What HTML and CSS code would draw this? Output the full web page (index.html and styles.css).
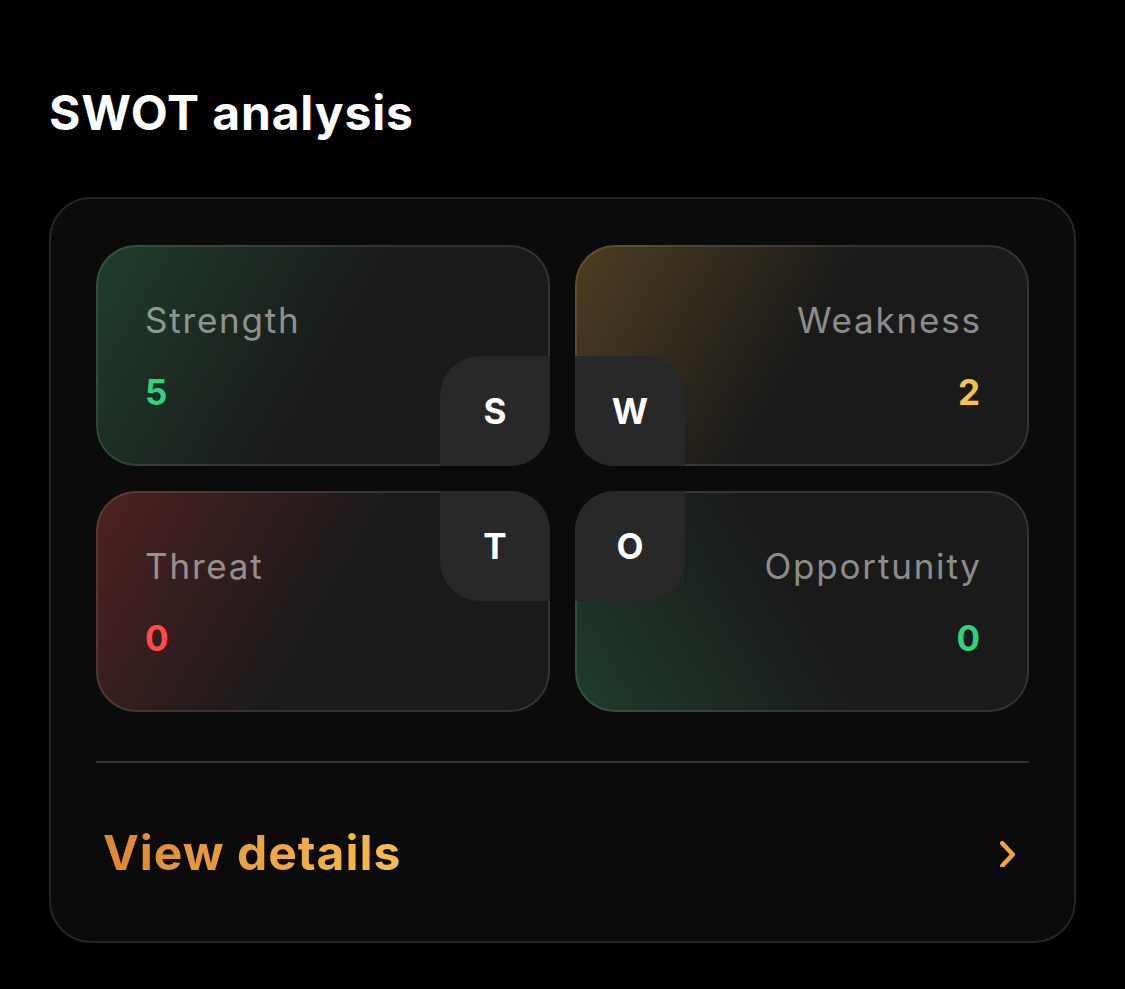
FILE: index.html
```html
<!DOCTYPE html>
<html lang="en">
<head>
<meta charset="utf-8">
<title>SWOT analysis</title>
<link rel="stylesheet" href="styles.css">
</head>
<body>
<main class="page">
  <h1 class="title">SWOT analysis</h1>
  <section class="panel">
    <div class="grid">
      <div class="card card-s">
        <div class="label">Strength</div>
        <div class="value value-green">5</div>
        <div class="tile tile-s">S</div>
      </div>
      <div class="card card-w right">
        <div class="label">Weakness</div>
        <div class="value value-yellow">2</div>
        <div class="tile tile-w">W</div>
      </div>
      <div class="card card-t">
        <div class="label">Threat</div>
        <div class="value value-red">0</div>
        <div class="tile tile-t">T</div>
      </div>
      <div class="card card-o right">
        <div class="label">Opportunity</div>
        <div class="value value-green">0</div>
        <div class="tile tile-o">O</div>
      </div>
    </div>
    <hr class="divider">
    <a class="footer" href="#">
      <span class="footer-text">View details</span>
      <svg class="chevron" width="18" height="30" viewBox="0 0 18 30" aria-hidden="true">
        <path d="M3.25 6.25 L13.75 17.5 L3.25 28.75" fill="none" stroke="#f0a43e" stroke-width="4.5" stroke-linecap="round" stroke-linejoin="round"/>
      </svg>
    </a>
  </section>
</main>
</body>
</html>
```

FILE: styles.css
```css
html, body {
  margin: 0;
  padding: 0;
  background: #000;
}

body {
  font-family: Inter, "Noto Sans", "Liberation Sans", sans-serif;
  color: #fff;
}

.page {
  padding: 80px 49px 0 49px;
  width: 1027px;
}

.title {
  margin: 0;
  font-size: 48px;
  font-weight: 700;
  line-height: 66px;
  letter-spacing: 0.85px;
  color: #fff;
}

.panel {
  margin-top: 51px;
  box-sizing: border-box;
  width: 1027px;
  background: #0b0b0b;
  border: 2px solid #262626;
  border-radius: 42px;
  padding: 46px 45px 0 45px;
}

.grid {
  display: grid;
  grid-template-columns: 1fr 1fr;
  grid-auto-rows: 221px;
  gap: 25px;
}

.card {
  position: relative;
  box-sizing: border-box;
  border: 2px solid rgba(255, 255, 255, 0.11);
  border-radius: 40px;
  padding: 53px 47px 0 47px;
  background-color: #1a1a1a;
  background-origin: border-box;
  background-repeat: no-repeat;
}

.card.right {
  text-align: right;
}

.card-s {
  background-image: linear-gradient(120deg, rgba(40, 110, 70, 0.42) 0%, rgba(26, 26, 26, 0) 52%);
}

.card-w {
  background-image: linear-gradient(120deg, rgba(140, 105, 40, 0.45) 0%, rgba(26, 26, 26, 0) 50%);
}

.card-t {
  background-image: linear-gradient(120deg, rgba(130, 40, 40, 0.5) 0%, rgba(26, 26, 26, 0) 52%);
}

.card-o {
  background-image: linear-gradient(60deg, rgba(40, 110, 70, 0.4) 0%, rgba(26, 26, 26, 0) 50%);
}

.label {
  font-size: 35px;
  line-height: 40px;
  font-weight: 400;
  letter-spacing: 1.8px;
  color: rgba(255, 255, 255, 0.5);
}

.card.right .label {
  margin-right: -1.8px;
}

.value {
  margin-top: 32px;
  font-size: 35px;
  line-height: 40px;
  font-weight: 700;
}

.value-green { color: #33d17a; }
.value-yellow { color: #fbc04a; }
.value-red { color: #ff4b4b; }

.tile {
  position: absolute;
  width: 110px;
  height: 110px;
  background: #282828;
  display: flex;
  align-items: center;
  justify-content: center;
  font-size: 35px;
  font-weight: 700;
  color: #fff;
}

.tile-s {
  right: -2px;
  bottom: -2px;
  border-radius: 40px 0 40px 0;
}

.tile-w {
  left: -2px;
  bottom: -2px;
  border-radius: 0 40px 0 40px;
}

.tile-t {
  right: -2px;
  top: -2px;
  border-radius: 0 40px 0 40px;
}

.tile-o {
  left: -2px;
  top: -2px;
  border-radius: 40px 0 40px 0;
}

.divider {
  margin: 49px 0 0 0;
  border: 0;
  height: 2px;
  background: #333;
}

.footer {
  display: flex;
  align-items: center;
  justify-content: space-between;
  height: 178px;
  padding: 0 12px 0 7px;
  text-decoration: none;
}

.footer-text {
  font-size: 48px;
  font-weight: 700;
  letter-spacing: 1px;
  background: linear-gradient(90deg, #df8634 0%, #f5be4e 100%);
  -webkit-background-clip: text;
  background-clip: text;
  color: transparent;
}

.chevron {
  display: block;
}
```
